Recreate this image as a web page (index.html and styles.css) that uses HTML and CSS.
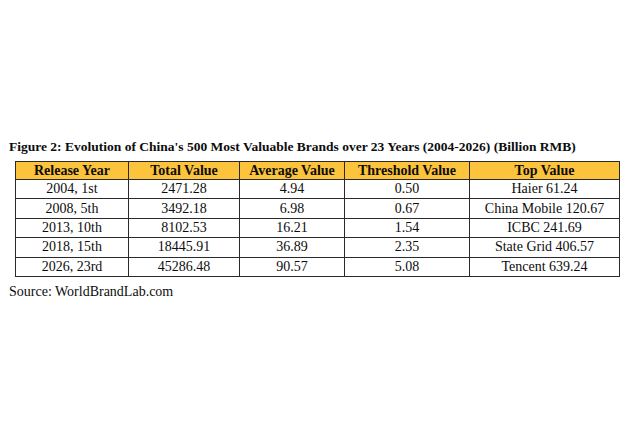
FILE: index.html
```html
<!DOCTYPE html>
<html lang="en">
<head>
<meta charset="utf-8">
<title>China's 500 Most Valuable Brands</title>
<link rel="stylesheet" href="styles.css">
</head>
<body>
<main class="page">
  <figure class="figure">
    <figcaption class="title">Figure 2: Evolution of China's 500 Most Valuable Brands over 23 Years (2004-2026) (Billion RMB)</figcaption>
    <table class="data">
      <colgroup>
        <col class="c1"><col class="c2"><col class="c3"><col class="c4"><col class="c5">
      </colgroup>
      <thead>
        <tr><th>Release Year</th><th>Total Value</th><th>Average Value</th><th>Threshold Value</th><th>Top Value</th></tr>
      </thead>
      <tbody>
        <tr><td>2004, 1st</td><td>2471.28</td><td>4.94</td><td>0.50</td><td>Haier 61.24</td></tr>
        <tr><td>2008, 5th</td><td>3492.18</td><td>6.98</td><td>0.67</td><td>China Mobile 120.67</td></tr>
        <tr><td>2013, 10th</td><td>8102.53</td><td>16.21</td><td>1.54</td><td>ICBC 241.69</td></tr>
        <tr><td>2018, 15th</td><td>18445.91</td><td>36.89</td><td>2.35</td><td>State Grid 406.57</td></tr>
        <tr><td>2026, 23rd</td><td>45286.48</td><td>90.57</td><td>5.08</td><td>Tencent 639.24</td></tr>
      </tbody>
    </table>
    <p class="source">Source: WorldBrandLab.com</p>
  </figure>
</main>
</body>
</html>
```
FILE: styles.css
```css
html, body {
  margin: 0;
  padding: 0;
  background: #ffffff;
}
body {
  font-family: "Liberation Serif", "Times New Roman", serif;
  color: #0d0d0d;
}
.page {
  width: 640px;
  height: 440px;
  display: flex;
  flex-direction: column;
  justify-content: center;
  box-sizing: border-box;
  padding: 0 0 0 9px;
}
.figure {
  margin: 0;
}
.title {
  font-weight: bold;
  font-size: 13.5px;
  line-height: 16px;
  margin: 0 0 6px 0;
  white-space: nowrap;
}
.data {
  margin-left: 6px;
  border-collapse: collapse;
  table-layout: fixed;
  width: 604px;
  font-size: 14px;
}
.c1 { width: 113px; }
.c2 { width: 111px; }
.c3 { width: 105px; }
.c4 { width: 125px; }
.c5 { width: 150px; }
.data th,
.data td {
  border: 1px solid #2a2a2a;
  padding: 0;
  text-align: center;
  white-space: nowrap;
}
.data th {
  background: #fcc33c;
  font-weight: bold;
  height: 17px;
  line-height: 17px;
}
.data td {
  height: 18.4px;
  line-height: 18px;
}
.source {
  margin: 6px 0 0 0;
  font-size: 14px;
  line-height: 18px;
}
```
